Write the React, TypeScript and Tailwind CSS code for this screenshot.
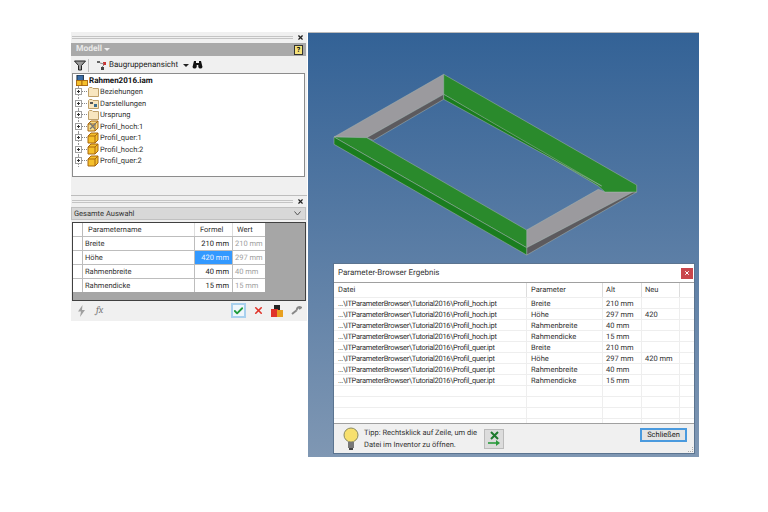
import { Check, X } from 'lucide-react';

const treeItems = [
  { label: 'Beziehungen', icon: 'folder' },
  { label: 'Darstellungen', icon: 'views' },
  { label: 'Ursprung', icon: 'folder' },
  { label: 'Profil_hoch:1', icon: 'edit' },
  { label: 'Profil_quer:1', icon: 'box' },
  { label: 'Profil_hoch:2', icon: 'box' },
  { label: 'Profil_quer:2', icon: 'box' },
];

const params = [
  { name: 'Breite', formula: '210 mm', value: '210 mm' },
  { name: 'Höhe', formula: '420 mm', value: '297 mm', active: true },
  { name: 'Rahmenbreite', formula: '40 mm', value: '40 mm' },
  { name: 'Rahmendicke', formula: '15 mm', value: '15 mm' },
];

const hoch = '...\\ITParameterBrowser\\Tutorial2016\\Profil_hoch.ipt';
const quer = '...\\ITParameterBrowser\\Tutorial2016\\Profil_quer.ipt';

const results = [
  { file: hoch, param: 'Breite', alt: '210 mm', neu: '' },
  { file: hoch, param: 'Höhe', alt: '297 mm', neu: '420' },
  { file: hoch, param: 'Rahmenbreite', alt: '40 mm', neu: '' },
  { file: hoch, param: 'Rahmendicke', alt: '15 mm', neu: '' },
  { file: quer, param: 'Breite', alt: '210 mm', neu: '' },
  { file: quer, param: 'Höhe', alt: '297 mm', neu: '420 mm' },
  { file: quer, param: 'Rahmenbreite', alt: '40 mm', neu: '' },
  { file: quer, param: 'Rahmendicke', alt: '15 mm', neu: '' },
  { file: '', param: '', alt: '', neu: '' },
  { file: '', param: '', alt: '', neu: '' },
  { file: '', param: '', alt: '', neu: '' },
];

function Grip() {
  return (
    <div className="flex items-center h-[9px] pl-[1px] pr-[3px] gap-[4px]">
      <div className="flex-1 h-[3px] border-y border-[#c4c4c4]" />
      <X size={7} strokeWidth={4} className="text-[#222]" />
    </div>
  );
}

function TreeIcon({ kind }: { kind: string }) {
  if (kind === 'folder' || kind === 'views') {
    return (
      <svg width="11" height="11" viewBox="0 0 11 11">
        <path d="M.5 2.5 L1.5 1.5 H4 L5 2.5 H10.5 V10.5 H.5 Z" fill="#f8e6c0" stroke="#bfa06a" />
        {kind === 'views' && (
          <>
            <rect x="2" y="4" width="3" height="2" fill="#555" />
            <rect x="6" y="6" width="3" height="3" fill="#3c6f8f" />
          </>
        )}
      </svg>
    );
  }
  return (
    <svg width="12" height="12" viewBox="0 0 12 12">
      <path d="M1 4 L4 1 H11 V8 L8 11 H1 Z" fill={kind === 'edit' ? '#f7dc8a' : '#f5c02c'} stroke="#a8660f" />
      <path d="M1 4 H8 V11 M8 4 L11 1" fill="none" stroke="#a8660f" />
      {kind === 'edit' && <path d="M3 9 L9 3 M3 3 L8 9" stroke="#777" strokeWidth="1.2" />}
    </svg>
  );
}

function ExpandBox() {
  return (
    <div className="flex items-center w-[12px] shrink-0 self-stretch relative">
      <div className="absolute left-[3px] top-0 bottom-0 border-l border-dotted border-[#999]" />
      <div className="w-[7px] h-[7px] border border-[#a0a0a0] bg-white flex items-center justify-center relative">
        <div className="w-[3px] h-px bg-[#333]" />
        <div className="absolute w-px h-[3px] bg-[#333]" />
      </div>
      <div className="w-[5px] border-t border-dotted border-[#888]" />
    </div>
  );
}

function ModelPanel() {
  return (
    <div className="h-[164px] bg-[#f0f0f0] border-b border-[#bdbdbd] pt-[1px] flex flex-col">
      <Grip />
      <div className="mt-[1px] h-[13px] bg-[#a9a9a9] flex items-center justify-between pl-[5px] pr-[3px] mr-[1px]">
        <div className="flex items-center gap-[2px] text-[8.5px] font-bold text-[#e8e8e8]">
          Modell
          <span className="w-0 h-0 border-x-[3px] border-x-transparent border-t-[3px] border-t-[#eee]" />
        </div>
        <div className="w-[9px] h-[10px] bg-[#f5e27a] border border-[#333] text-[7px] font-bold leading-[8px] text-center">?</div>
      </div>
      <div className="h-[16px] flex items-center pl-[3px] mt-[1px] text-[#222]">
        <svg width="12" height="11" viewBox="0 0 12 11">
          <path d="M.5 1 H11.5 L7.5 5.5 V10 L4.5 10 V5.5 Z" fill="#999" stroke="#222" />
        </svg>
        <div className="w-px h-[13px] bg-[#bbb] ml-[2px] mr-[7px]" />
        <svg width="12" height="11" viewBox="0 0 12 11">
          <rect x="1" y="1" width="3" height="2" fill="#666" />
          <rect x="7" y="2" width="3" height="3" fill="#c33" />
          <rect x="5" y="7" width="3" height="3" fill="#444" />
          <path d="M4 3 L8 4 M8 5 L6 7" stroke="#888" />
        </svg>
        <span className="text-[8px] ml-[1px] w-[66px] whitespace-nowrap">Baugruppenansicht</span>
        <span className="ml-[8px] w-0 h-0 border-x-[3px] border-x-transparent border-t-[3px] border-t-[#222]" />
        <svg width="11" height="10" viewBox="0 0 11 10" className="ml-[3px]">
          <path d="M2 1 H4 V3 H7 V1 H9 L10.5 7 A2.2 2.2 0 0 1 6.3 7 V5 H4.7 V7 A2.2 2.2 0 0 1 .5 7 Z" fill="#111" />
        </svg>
      </div>
      <div className="mx-[1px] mr-[2px] h-[104px] bg-white border border-[#8c8c8c] pl-[2px] pt-[1px]">
        <div className="flex items-center gap-[1px] h-[11px]">
          <svg width="12" height="11" viewBox="0 0 13 12" className="ml-[1px]">
            <rect x="1" y="0" width="7" height="6" fill="#3b6ea8" stroke="#123" />
            <rect x="0.5" y="6" width="6" height="5.5" fill="#f5c02c" stroke="#a8660f" />
            <rect x="6.5" y="6" width="6" height="5.5" fill="#f5c02c" stroke="#a8660f" />
          </svg>
          <span className="text-[8px] font-bold text-[#111]">Rahmen2016.iam</span>
        </div>
        <div className="flex flex-col">
          {treeItems.map((item) => (
            <div key={item.label} className="h-[11.5px] flex items-center">
              <ExpandBox />
              <div className="w-[12px] flex justify-center">
                <TreeIcon kind={item.icon} />
              </div>
              <span className="ml-[1px] text-[7.5px] text-[#333]">{item.label}</span>
            </div>
          ))}
        </div>
      </div>
    </div>
  );
}

function ParameterPanel() {
  return (
    <div className="bg-[#f0f0f0] pt-[1px] h-[125px] flex flex-col">
      <Grip />
      <div className="mt-[1px] h-[13px] mr-[1px] bg-[#d8d8d8] border border-[#c0c0c0] flex items-center justify-between pl-[2px] pr-[4px]">
        <span className="text-[7.5px] text-[#333]">Gesamte Auswahl</span>
        <svg width="7" height="5" viewBox="0 0 7 5">
          <path d="M.5 .5 L3.5 4 L6.5 .5" fill="none" stroke="#555" />
        </svg>
      </div>
      <div className="mt-[2px] ml-[1px] mr-[1px] h-[79px] bg-[#a6a6a6] border border-[#404040]">
        <div className="w-[192px] bg-white text-[7.5px] text-[#333]">
          <div className="grid grid-cols-[10px_112px_38px_32px] h-[13px]">
            <div className="border-r border-[#bbb]" />
            <div className="pl-[5px] border-r border-[#ddd] flex items-center">Parametername</div>
            <div className="pl-[5px] border-r border-[#ddd] flex items-center">Formel</div>
            <div className="pl-[4px] flex items-center">Wert</div>
          </div>
          {params.map((p) => (
            <div key={p.name} className="grid grid-cols-[10px_112px_38px_32px] h-[14px] border-t border-[#bdbdbd]">
              <div className="border-r border-[#bbb]" />
              <div className="pl-[2px] border-r border-[#bdbdbd] flex items-center">{p.name}</div>
              <div className={`pr-[3px] flex items-center justify-end border-r border-[#bdbdbd] ${p.active ? 'bg-[#3399ff] text-[#e8f2ff]' : 'text-[#222]'}`}>{p.formula}</div>
              <div className="pl-[2px] flex items-center text-[#a0a0a0]">{p.value}</div>
            </div>
          ))}
        </div>
      </div>
      <div className="h-[19px] flex items-center pl-[6px] pr-[5px]">
        <svg width="9" height="12" viewBox="0 0 9 12">
          <path d="M5.5 0 L1 6.5 H4 L3 12 L8 5 H5 Z" fill="#a0a0a0" />
        </svg>
        <span className="ml-[10px] text-[10px] italic font-serif text-[#777]">fx</span>
        <div className="ml-auto w-[15px] h-[15px] border-2 border-[#a8d0ee] bg-[#eef6fc] flex items-center justify-center">
          <Check size={12} strokeWidth={4} className="text-[#1e9b3a]" />
        </div>
        <X size={11} strokeWidth={3.5} className="ml-[7px] text-[#e0342a]" />
        <svg width="12" height="12" viewBox="0 0 12 12" className="ml-[7px]">
          <rect x="3" y="0" width="6" height="5" fill="#222" />
          <rect x="0" y="4" width="7" height="8" fill="#e0342a" />
          <rect x="6" y="5" width="6" height="7" fill="#e8a020" />
        </svg>
        <svg width="11" height="11" viewBox="0 0 11 11" className="ml-[8px]">
          <path d="M1 9 L6 5 M6 5 A2.5 2.5 0 0 1 10 2.5 L8 4" fill="none" stroke="#888" strokeWidth="2" />
        </svg>
      </div>
    </div>
  );
}

function Frame() {
  return (
    <svg width="391" height="240" viewBox="308 32 391 240" className="block">
      <g stroke="#a8b4ae" strokeWidth="0.5" strokeLinejoin="round">
        {/* grey members */}
        <path d="M443.7 73.3 V93.3 L366.7 136.7 L334 136 Z" fill="#9b9a9e" />
        <path d="M443.7 93.3 V98.3 L373.3 139.3 L366.7 136.7 Z" fill="#5c5a5e" />
        <path d="M526.7 229 L598.3 188.3 L605 191 H633 L526.7 246.7 Z" fill="#9b9a9e" />
        <path d="M526.7 246.7 L633 191 H636.7 L526.7 254 Z" fill="#5c5a5e" />
        {/* green members */}
        <path d="M443.7 73.3 L636.7 184 V191 H605 L598.3 185 L443.7 93.3 Z" fill="#2a8a2c" />
        <path d="M443.7 93.3 L598.3 183 L601.7 185 L443.7 98.3 Z" fill="#1a7d1e" />
        <path d="M334 136 L366.7 136.7 L526.7 229 V246.7 Z" fill="#2a8a2c" />
        <path d="M334 136 L526.7 246.7 V254 L334 143.3 Z" fill="#1a7d1e" />
      </g>
    </svg>
  );
}

function ResultDialog() {
  return (
    <div className="absolute left-[25px] top-[230px] w-[362px] h-[191px] border border-[#5b7490] bg-[#f0f0f0] flex flex-col">
      <div className="h-[18px] bg-white flex items-center justify-between pl-[4px] pr-[1px] shrink-0">
        <span className="text-[8px] text-[#333]">Parameter-Browser Ergebnis</span>
        <div className="w-[12px] h-[11px] bg-[#c9464c] flex items-center justify-center">
          <X size={6} strokeWidth={4} className="text-white" />
        </div>
      </div>
      <div className="h-[141px] bg-white border-t border-[#a0a0a0] text-[7.5px] text-[#333] shrink-0 overflow-hidden">
        <div className="grid grid-cols-[193px_76px_39px_38px_1fr] h-[15px] border-b border-[#eee]">
          <div className="pl-[4px] flex items-center border-r border-[#ddd]">Datei</div>
          <div className="pl-[4px] flex items-center border-r border-[#ddd]">Parameter</div>
          <div className="pl-[3px] flex items-center border-r border-[#ddd]">Alt</div>
          <div className="pl-[3px] flex items-center border-r border-[#ddd]">Neu</div>
          <div />
        </div>
        {results.map((r, i) => (
          <div key={i} className="grid grid-cols-[193px_76px_39px_38px_1fr] h-[11px] border-b border-[#eeeeee]">
            <div className="pl-[4px] flex items-center border-r border-[#eee] whitespace-nowrap tracking-[-0.3px]">{r.file}</div>
            <div className="pl-[4px] flex items-center border-r border-[#eee]">{r.param}</div>
            <div className="pl-[3px] flex items-center border-r border-[#eee]">{r.alt}</div>
            <div className="pl-[3px] flex items-center border-r border-[#eee]">{r.neu}</div>
            <div />
          </div>
        ))}
        <div className="grid grid-cols-[193px_76px_39px_38px_1fr] h-[6px]">
          <div className="border-r border-[#eee]" />
          <div className="border-r border-[#eee]" />
          <div className="border-r border-[#eee]" />
          <div className="border-r border-[#eee]" />
          <div />
        </div>
      </div>
      <div className="flex-1 border-t border-[#a0a0a0] flex items-center pl-[8px] pr-[7px] relative">
        <svg width="18" height="24" viewBox="0 0 16 24">
          <circle cx="8" cy="8" r="7" fill="#f7e06e" stroke="#8a8a60" />
          <rect x="5" y="15" width="6" height="6" fill="#777" />
          <rect x="6" y="21" width="4" height="2" fill="#444" />
        </svg>
        <div className="ml-[4px] text-[7.5px] leading-[11.5px] text-[#333] whitespace-nowrap w-[120px]">
          Tipp: Rechtsklick auf Zeile, um die
          <br />
          Datei im Inventor zu öffnen.
        </div>
        <div className="w-[20px] h-[20px] bg-[#dcdcdc] border border-[#bbb] flex items-center justify-center">
          <svg width="14" height="15" viewBox="0 0 14 15">
            <path d="M4 1 L11 8 M11 1 L4 8" stroke="#1e7a2e" strokeWidth="2" />
            <path d="M1 12 H10" stroke="#2a9a3c" strokeWidth="1.6" />
            <path d="M9 9 L13 12 L9 15 Z" fill="#2a9a3c" />
          </svg>
        </div>
        <div className="ml-auto mb-[7px] w-[47px] h-[14px] border-2 border-[#4a9ade] bg-[#e4e4e4] text-[7.5px] text-[#222] flex items-center justify-center">
          Schließen
        </div>
        <div className="absolute right-[1px] bottom-[1px] w-[5px] h-[5px] border-b border-r border-dotted border-[#aaa]" />
      </div>
    </div>
  );
}

export default function App() {
  return (
    <div className="w-[768px] h-[512px] bg-white overflow-hidden flex pt-[32px] pl-[71px] font-['Roboto',sans-serif] [text-rendering:geometricPrecision]">
      <div className="w-[236px] mr-[1px] flex flex-col">
        <ModelPanel />
        <ParameterPanel />
      </div>
      <div className="relative w-[391px] h-[425px] bg-gradient-to-b from-[#336296] to-[#7f97b3] border-t border-[#bbb]">
        <Frame />
        <ResultDialog />
      </div>
    </div>
  );
}
